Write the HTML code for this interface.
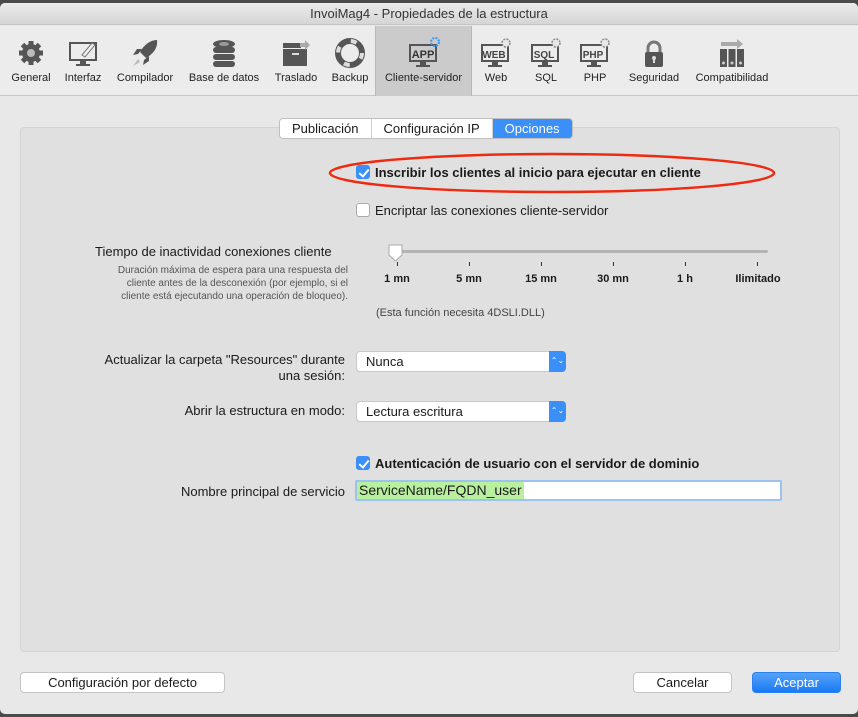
<!DOCTYPE html>
<html><head><meta charset="utf-8"><style>
*{box-sizing:border-box;margin:0;padding:0}
body{width:858px;height:717px;background:#4a4a4a;font-family:"Liberation Sans",sans-serif;font-size:13px;color:#1a1a1a;position:relative;overflow:hidden}
.win{position:absolute;left:0;top:3px;width:858px;height:711px;background:#e8e8e8;border-radius:5px;overflow:hidden}
.title{height:22px;background:linear-gradient(#ebebeb,#d6d6d6);text-align:center;line-height:22px;font-size:13px;color:#333;border-bottom:1px solid #c4c4c4}
.tb{position:absolute;top:23px;left:0;right:0;height:70px;background:#ececec;border-bottom:1px solid #c6c6c6}
.it{position:absolute;top:0;height:70px;text-align:center;font-size:11px;color:#222}
.it .lb{position:absolute;bottom:12px;left:0;right:0;white-space:nowrap}
.it svg{position:absolute;top:11px;left:50%;margin-left:-16px}
.sel{background:#cbcbcb;border-left:1px solid #b8b8b8;border-right:1px solid #b8b8b8}
.panel{position:absolute;left:20px;top:127px;width:820px;height:525px;background:#e0e0e0;border:1px solid #d4d4d4;border-radius:4px}
.a{position:absolute;white-space:nowrap}
.seg{position:absolute;left:279px;top:118px;height:21px;display:flex;border:1px solid #c0c0c0;border-radius:4px;background:#fff;overflow:hidden;font-size:13px}
.seg div{padding:0 12px;line-height:19px;border-right:1px solid #cfcfcf}
.seg .on{background:#3a8ff8;color:#fff;border:none}
.cb{position:absolute;width:14px;height:14px;border-radius:3px;background:#fff;border:1px solid #aaa}
.cb.on{background:#3a8ff8;border-color:#3a8ff8}
.cb.on:after{content:"";position:absolute;left:4px;top:1px;width:4px;height:8px;border:solid #fff;border-width:0 2px 2px 0;transform:rotate(40deg)}
.pop{position:absolute;left:356px;width:210px;height:21px;background:#fff;border:1px solid #c8c8c8;border-radius:4px;line-height:19px;padding-left:9px}
.pop:after{content:"⌃⌄";position:absolute;right:-1px;top:-1px;width:17px;height:21px;background:#3a8ff8;border-radius:0 4px 4px 0;color:#fff;font-size:8px;line-height:20px;text-align:center}
.btn{position:absolute;top:672px;height:21px;background:#fff;border:1px solid #c4c4c4;border-radius:4px;text-align:center;line-height:19px;font-size:13px}
.tick{position:absolute;top:262px;width:1px;height:4px;background:#333}
.tl{position:absolute;top:273px;font-size:11px;font-weight:bold;width:60px;text-align:center}
</style></head><body>
<div class="win">
<div class="title">InvoiMag4 - Propiedades de la estructura</div>
<div class="tb">
<div class="it" style="left:5px;width:52px"><svg width="32" height="32" viewBox="0 0 32 32"><g fill="#555"><circle cx="16" cy="16" r="9"/><g stroke="#555" stroke-width="5"><line x1="16" y1="4" x2="16" y2="28"/><line x1="4" y1="16" x2="28" y2="16"/><line x1="7.5" y1="7.5" x2="24.5" y2="24.5"/><line x1="24.5" y1="7.5" x2="7.5" y2="24.5"/></g></g><circle cx="16" cy="16" r="4" fill="#bbb"/></svg><div class="lb">General</div></div>
<div class="it" style="left:59px;width:48px"><svg width="32" height="32"><rect x="3" y="6" width="26" height="17" fill="none" stroke="#555" stroke-width="2"/><rect x="13" y="23" width="6" height="4" fill="#555"/><rect x="9" y="27" width="14" height="2" fill="#555"/><path d="M15 18l10-12 3 2-10 12z" fill="#eee" stroke="#777"/></svg><div class="lb">Interfaz</div></div>
<div class="it" style="left:112px;width:66px"><svg width="32" height="32"><path d="M28 3c-7 0-13 5-17 12l6 6c7-4 12-10 11-18z" fill="#555"/><path d="M9 17l-5 1 4-6 5 0zM15 23l-1 5 6-4 0-5z" fill="#555"/><path d="M9 22l-5 7 7-4z" fill="#bbb"/></svg><div class="lb">Compilador</div></div>
<div class="it" style="left:184px;width:80px"><svg width="32" height="32"><g fill="#555"><ellipse cx="16" cy="7" rx="11" ry="4"/><rect x="5" y="10" width="22" height="6" rx="3"/><rect x="5" y="17" width="22" height="6" rx="3"/><rect x="5" y="24" width="22" height="6" rx="3"/></g><ellipse cx="16" cy="7" rx="5" ry="2" fill="#999"/></svg><div class="lb">Base de datos</div></div>
<div class="it" style="left:270px;width:52px"><svg width="32" height="32"><rect x="3" y="6" width="18" height="5" fill="#555"/><rect x="3" y="12" width="24" height="17" fill="#555"/><rect x="12" y="16" width="7" height="2" fill="#ddd"/><path d="M20 6h5v-3l5 5-5 5v-3h-5z" fill="#aaa"/></svg><div class="lb">Traslado</div></div>
<div class="it" style="left:326px;width:48px"><svg width="32" height="32"><circle cx="16" cy="16" r="12" fill="none" stroke="#555" stroke-width="6"/><circle cx="16" cy="16" r="12" fill="none" stroke="#ddd" stroke-width="4" stroke-dasharray="6 13"/></svg><div class="lb">Backup</div></div>
<div class="it sel" style="left:375px;width:97px"><svg width="32" height="32"><rect x="2" y="8" width="26" height="16" fill="none" stroke="#555" stroke-width="2"/><text x="15" y="21" font-size="11" font-weight="bold" text-anchor="middle" fill="#333" font-family="Liberation Sans">APP</text><rect x="12" y="24" width="6" height="4" fill="#555"/><rect x="8" y="28" width="14" height="2" fill="#555"/><circle cx="27" cy="5" r="4" fill="none" stroke="#39f" stroke-width="2" stroke-dasharray="2 1.2"/></svg><div class="lb">Cliente-servidor</div></div>
<div class="it" style="left:475px;width:42px"><svg width="32" height="32"><rect x="2" y="8" width="26" height="16" fill="none" stroke="#555" stroke-width="2"/><text x="14" y="21" font-size="10" font-weight="bold" text-anchor="middle" fill="#444" font-family="Liberation Sans">WEB</text><rect x="12" y="24" width="6" height="4" fill="#555"/><rect x="8" y="28" width="14" height="2" fill="#555"/><circle cx="26" cy="6" r="4" fill="#e8e8e8" stroke="#888" stroke-width="1.5" stroke-dasharray="2 1.2"/></svg><div class="lb">Web</div></div>
<div class="it" style="left:525px;width:42px"><svg width="32" height="32"><rect x="2" y="8" width="26" height="16" fill="none" stroke="#555" stroke-width="2"/><text x="14" y="21" font-size="10" font-weight="bold" text-anchor="middle" fill="#444" font-family="Liberation Sans">SQL</text><rect x="12" y="24" width="6" height="4" fill="#555"/><rect x="8" y="28" width="14" height="2" fill="#555"/><circle cx="26" cy="6" r="4" fill="#e8e8e8" stroke="#888" stroke-width="1.5" stroke-dasharray="2 1.2"/></svg><div class="lb">SQL</div></div>
<div class="it" style="left:574px;width:42px"><svg width="32" height="32"><rect x="2" y="8" width="26" height="16" fill="none" stroke="#555" stroke-width="2"/><text x="14" y="21" font-size="10" font-weight="bold" text-anchor="middle" fill="#444" font-family="Liberation Sans">PHP</text><rect x="12" y="24" width="6" height="4" fill="#555"/><rect x="8" y="28" width="14" height="2" fill="#555"/><circle cx="26" cy="6" r="4" fill="#e8e8e8" stroke="#888" stroke-width="1.5" stroke-dasharray="2 1.2"/></svg><div class="lb">PHP</div></div>
<div class="it" style="left:624px;width:60px"><svg width="32" height="32"><path d="M10 16v-5a6 6 0 0 1 12 0v5" fill="none" stroke="#777" stroke-width="3"/><rect x="7" y="15" width="18" height="15" rx="2" fill="#555"/><circle cx="16" cy="21" r="2" fill="#ddd"/><rect x="15" y="21" width="2" height="5" fill="#ddd"/></svg><div class="lb">Seguridad</div></div>
<div class="it" style="left:690px;width:84px"><svg width="32" height="32"><path d="M5 5h16v-3l6 5-6 5v-3h-16z" fill="#aaa"/><g fill="#555"><rect x="4" y="12" width="7" height="18"/><rect x="12.5" y="12" width="7" height="18"/><rect x="21" y="12" width="7" height="18"/></g><g fill="#ccc"><circle cx="7.5" cy="26" r="1.5"/><circle cx="16" cy="26" r="1.5"/><circle cx="24.5" cy="26" r="1.5"/></g></svg><div class="lb">Compatibilidad</div></div>
</div>
</div>
<div class="panel"></div>
<div class="seg"><div>Publicación</div><div>Configuración IP</div><div class="on">Opciones</div></div>
<svg class="a" style="left:328px;top:152px" width="450" height="42"><ellipse cx="224" cy="21" rx="222" ry="19" fill="none" stroke="#ee2a10" stroke-width="2.5"/></svg>
<div class="cb on" style="left:356px;top:165px"></div>
<div class="a" style="left:375px;top:165px;font-weight:bold">Inscribir los clientes al inicio para ejecutar en cliente</div>
<div class="cb" style="left:356px;top:203px"></div>
<div class="a" style="left:375px;top:203px">Encriptar las conexiones cliente-servidor</div>
<div class="a" style="left:95px;top:244px">Tiempo de inactividad conexiones cliente</div>
<div class="a" style="left:48px;top:264px;width:300px;text-align:right;font-size:10px;color:#555;line-height:13px">Duración máxima de espera para una respuesta del<br>cliente antes de la desconexión (por ejemplo, si el<br>cliente está ejecutando una operación de bloqueo).</div>
<div class="a" style="left:390px;top:250px;width:378px;height:3px;background:#b4b4b4;border-radius:2px"></div>
<svg class="a" style="left:387px;top:243px" width="18" height="20"><path d="M2 2h13v10l-6.5 6-6.5-6z" fill="#fff" stroke="#aaa"/></svg>
<div class="tick" style="left:397px"></div><div class="tick" style="left:469px"></div><div class="tick" style="left:541px"></div><div class="tick" style="left:613px"></div><div class="tick" style="left:685px"></div><div class="tick" style="left:757px"></div>
<div class="tl" style="left:367px">1 mn</div><div class="tl" style="left:439px">5 mn</div><div class="tl" style="left:511px">15 mn</div><div class="tl" style="left:583px">30 mn</div><div class="tl" style="left:655px">1 h</div><div class="tl" style="left:728px">Ilimitado</div>
<div class="a" style="left:376px;top:307px;font-size:11px;color:#444">(Esta función necesita 4DSLI.DLL)</div>
<div class="a" style="left:45px;top:352px;width:300px;text-align:right;line-height:16px">Actualizar la carpeta "Resources" durante<br>una sesión:</div>
<div class="pop" style="top:351px">Nunca</div>
<div class="a" style="left:60px;top:403px;width:285px;text-align:right">Abrir la estructura en modo:</div>
<div class="pop" style="top:401px">Lectura escritura</div>
<div class="cb on" style="left:356px;top:456px"></div>
<div class="a" style="left:375px;top:456px;font-weight:bold">Autenticación de usuario con el servidor de dominio</div>
<div class="a" style="left:60px;top:484px;width:285px;text-align:right">Nombre principal de servicio</div>
<div class="a" style="left:355px;top:480px;width:427px;height:21px;background:#fff;border:2px solid #9cc3f0;border-radius:2px"><span style="background:#b8f0a0;padding:0 2px;line-height:17px;font-size:14px;display:inline-block">ServiceName/FQDN_user</span></div>
<div class="btn" style="left:20px;width:205px">Configuración por defecto</div>
<div class="btn" style="left:633px;width:99px">Cancelar</div>
<div class="btn" style="left:752px;width:89px;background:linear-gradient(#55a2fa,#1a7af3);border-color:#2a80f0;color:#fff">Aceptar</div>
</body></html>
